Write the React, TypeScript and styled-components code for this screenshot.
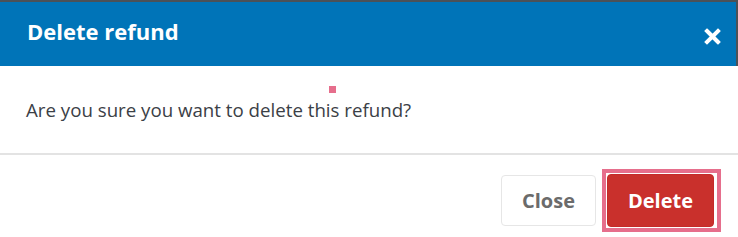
import React from 'react';
import styled, { createGlobalStyle } from 'styled-components';

const GlobalStyle = createGlobalStyle`
  html, body {
    margin: 0;
    padding: 0;
    background: #ffffff;
    font-family: 'Open Sans', 'Liberation Sans', sans-serif;
  }
`;

const Dialog = styled.div`
  position: relative;
  width: 738px;
  height: 237px;
  background: #ffffff;
  display: flex;
  flex-direction: column;
`;

const Header = styled.div`
  height: 64px;
  box-sizing: content-box;
  border-top: 2px solid #4b5157;
  border-right: 2px solid #4b5157;
  background: #0074b8;
  display: flex;
  align-items: center;
  justify-content: space-between;
  padding: 0 14px 0 27px;
`;

const Title = styled.h2`
  margin: 0;
  color: #ffffff;
  font-size: 22px;
  font-weight: 700;
  line-height: 1;
  padding-bottom: 7px;
`;

const CloseIcon = styled.button`
  border: 0;
  background: none;
  padding: 0;
  width: 20px;
  height: 20px;
  display: flex;
  align-items: center;
  justify-content: center;
  cursor: pointer;
  margin-top: 4px;
`;

const Body = styled.div`
  height: 87px;
  display: flex;
  align-items: center;
  padding: 0 26px;
  border-bottom: 2px solid #e3e3e3;
  color: #3b4046;
  font-size: 18.7px;
`;

const Footer = styled.div`
  flex: 1;
  display: flex;
  justify-content: flex-end;
  align-items: flex-start;
  gap: 11px;
  padding: 19px 24px 0 0;
`;

const Button = styled.button<{ $danger?: boolean }>`
  position: relative;
  width: ${(p) => (p.$danger ? '107px' : '95px')};
  height: ${(p) => (p.$danger ? '53px' : '51px')};
  margin-top: ${(p) => (p.$danger ? '0' : '1px')};
  padding: 0;
  border-radius: 4px;
  border: 1px solid ${(p) => (p.$danger ? '#c42a2a' : '#e6e6e6')};
  background: ${(p) => (p.$danger ? '#c9302c' : '#ffffff')};
  color: ${(p) => (p.$danger ? '#ffffff' : '#6b6b6b')};
  font-family: 'Open Sans', 'Liberation Sans', sans-serif;
  font-size: 20px;
  font-weight: 700;
  outline: none;

  &::after {
    content: '';
    display: ${(p) => (p.$danger ? 'block' : 'none')};
    position: absolute;
    top: -6px;
    left: -6px;
    right: -8px;
    bottom: -6px;
    border: 4px solid #e66e8c;
  }
`;

const FocusDot = styled.span`
  position: absolute;
  left: 329px;
  top: 86px;
  width: 7px;
  height: 7px;
  background: #e66e8c;
`;

export default function App() {
  return (
    <>
      <GlobalStyle />
      <Dialog>
        <Header>
          <Title>Delete refund</Title>
          <CloseIcon aria-label="Close">
            <svg width="17" height="17" viewBox="0 0 17 17">
              <path d="M3 3 L14 14 M14 3 L3 14" stroke="#ffffff" strokeWidth="4" strokeLinecap="square" />
            </svg>
          </CloseIcon>
        </Header>
        <Body>Are you sure you want to delete this refund?</Body>
        <Footer>
          <Button>Close</Button>
          <Button $danger>Delete</Button>
        </Footer>
        <FocusDot />
      </Dialog>
    </>
  );
}
